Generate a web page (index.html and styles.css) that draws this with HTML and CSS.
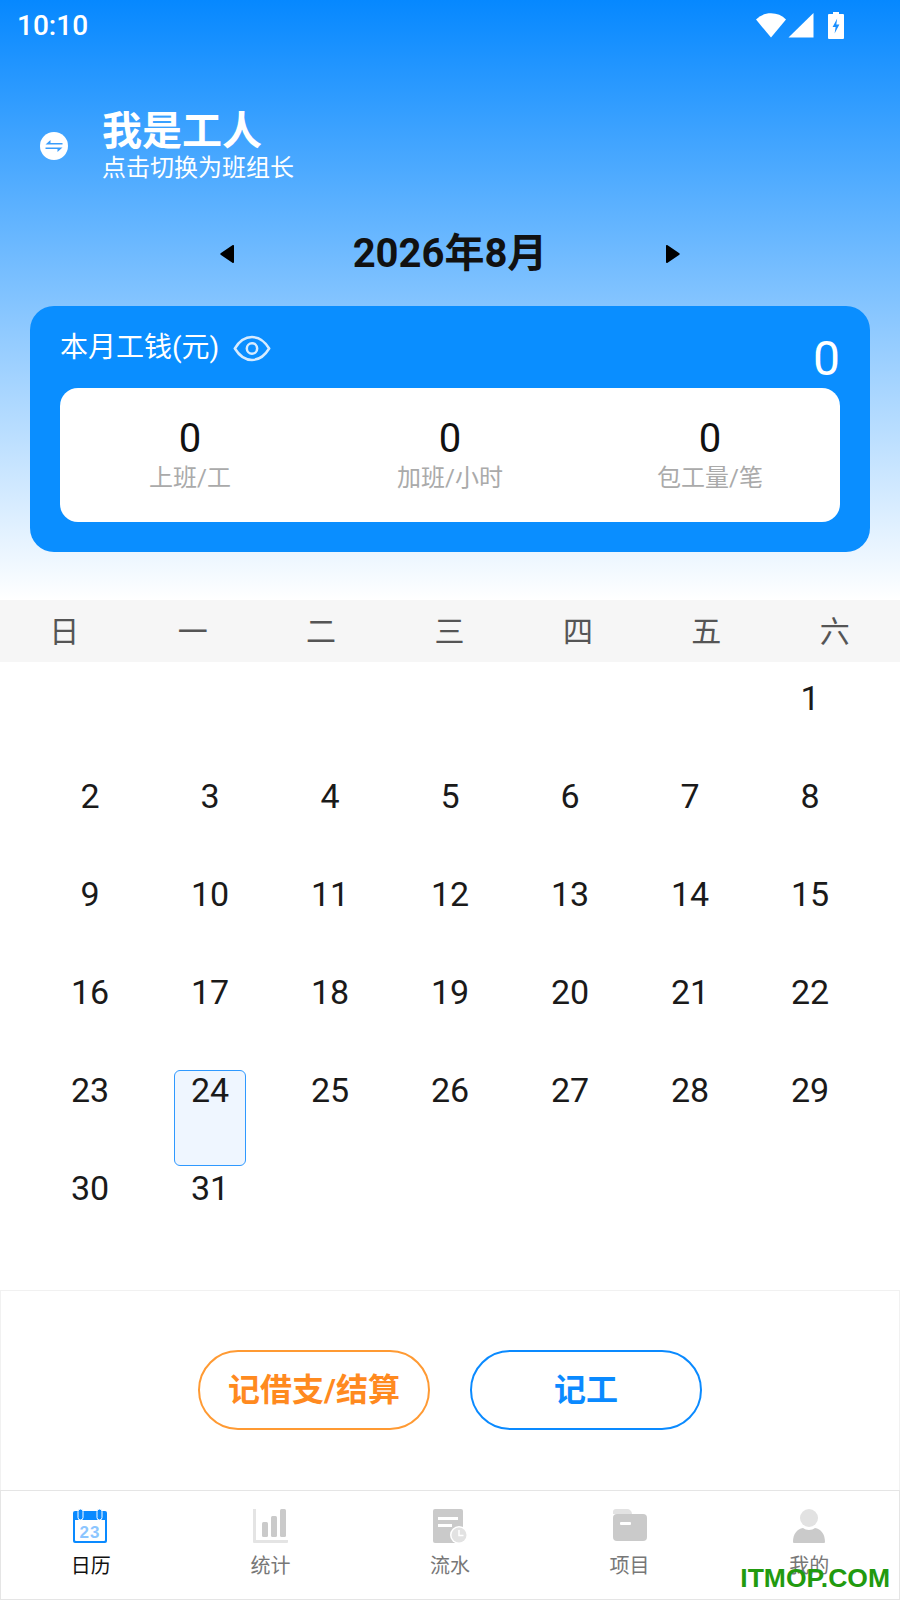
FILE: index.html
```html
<!DOCTYPE html>
<html lang="zh">
<head>
    <meta charset="UTF-8">
    <meta name="viewport" content="width=device-width, initial-scale=1.0">
    <title>我是工人</title>
    <link rel="stylesheet" href="styles.css">
</head>
<body>
<div class="page">
    <!-- Blue header -->
    <div class="header">
        <div class="status-bar">
            <span class="status-time">10:10</span>
            <div class="status-icons">
                <svg class="icon-wifi" width="30" height="26" viewBox="0 0 30 26"><path d="M0 7.500C4 3.400 9 1.300 15 1.300s11 2.100 15 6.200L15 25.600z" fill="#fff"/></svg>
                <svg class="icon-signal" width="26" height="26" viewBox="0 0 26 26"><path d="M25.500 1v24.500H.5z" fill="#fff"/></svg>
                <svg class="icon-battery" width="16" height="27" viewBox="0 0 16 27"><path d="M5 0h6v2h4a1 1 0 0 1 1 1v23a1 1 0 0 1-1 1H1a1 1 0 0 1-1-1V3a1 1 0 0 1 1-1h4z" fill="#fff"/><path d="M9.200 6.500 4.600 15h3l-1 6.500 4.800-9h-3.100z" fill="#1a90ff"/></svg>
            </div>
        </div>

        <div class="role-row">
            <svg class="role-icon" width="28" height="28" viewBox="0 0 28 28">
                <circle cx="14" cy="14" r="14" fill="#fff"/>
                <path d="M5.500 12.500 10.500 8v3h12v1.500zM22.500 15.500 17.500 20v-3h-12v-1.500z" fill="#3a9dfc"/>
            </svg>
            <div class="role-text">
                <div class="role-title">我是工人</div>
                <div class="role-sub">点击切换为班组长</div>
            </div>
        </div>

        <div class="month-row">
            <svg width="15" height="18" viewBox="0 0 15 18"><path d="M14 1v16a1 1 0 0 1-1.600.8L1 10a1.200 1.200 0 0 1 0-2L12.400.2A1 1 0 0 1 14 1z" fill="#000"/></svg>
            <span class="month-title">2026年8月</span>
            <svg width="15" height="18" viewBox="0 0 15 18"><path d="M1 1v16a1 1 0 0 0 1.600.8L14 10a1.200 1.200 0 0 0 0-2L2.600.2A1 1 0 0 0 1 1z" fill="#000"/></svg>
        </div>

        <div class="wage-card">
            <div class="wage-top">
                <span class="wage-label">本月工钱(元)</span>
                <svg class="wage-eye" width="38" height="27" viewBox="0 0 36 26" fill="none" stroke="#d6ebff" stroke-width="2.400">
                    <path d="M1.500 13C6 5.500 11.500 2 18 2s12 3.500 16.500 11C30 20.500 24.500 24 18 24S6 20.500 1.500 13z"/>
                    <circle cx="18" cy="13" r="5"/>
                </svg>
                <span class="wage-amount">0</span>
            </div>
            <div class="wage-stats">
                <div class="stat">
                    <div class="stat-num">0</div>
                    <div class="stat-label">上班/工</div>
                </div>
                <div class="stat">
                    <div class="stat-num">0</div>
                    <div class="stat-label">加班/小时</div>
                </div>
                <div class="stat">
                    <div class="stat-num">0</div>
                    <div class="stat-label">包工量/笔</div>
                </div>
            </div>
        </div>
    </div>

    <!-- Calendar -->
    <div class="week-row">
        <span>日</span><span>一</span><span>二</span><span>三</span><span>四</span><span>五</span><span>六</span>
    </div>
    <div class="calendar">
        <div class="day"></div><div class="day"></div><div class="day"></div><div class="day"></div><div class="day"></div><div class="day"></div><div class="day">1</div>
        <div class="day">2</div><div class="day">3</div><div class="day">4</div><div class="day">5</div><div class="day">6</div><div class="day">7</div><div class="day">8</div>
        <div class="day">9</div><div class="day">10</div><div class="day">11</div><div class="day">12</div><div class="day">13</div><div class="day">14</div><div class="day">15</div>
        <div class="day">16</div><div class="day">17</div><div class="day">18</div><div class="day">19</div><div class="day">20</div><div class="day">21</div><div class="day">22</div>
        <div class="day">23</div><div class="day today">24</div><div class="day">25</div><div class="day">26</div><div class="day">27</div><div class="day">28</div><div class="day">29</div>
        <div class="day">30</div><div class="day">31</div>
    </div>

    <!-- Action buttons -->
    <div class="actions">
        <button class="btn btn-orange">记借支/结算</button>
        <button class="btn btn-blue">记工</button>
    </div>

    <!-- Bottom tabs -->
    <div class="tabbar">
        <div class="tab active">
            <svg width="36" height="36" viewBox="0 0 36 36">
                <path d="M3 3h30a2 2 0 0 1 2 2v28a2 2 0 0 1-2 2H3a2 2 0 0 1-2-2V5a2 2 0 0 1 2-2z" fill="#0a8aff"/>
                <path d="M3 12h30v20a1 1 0 0 1-1 1H4a1 1 0 0 1-1-1z" fill="#fff"/>
                <rect x="6" y="1" width="5" height="11" rx="2.500" fill="#0a8aff" stroke="#fff"/>
                <rect x="25" y="1" width="5" height="11" rx="2.500" fill="#0a8aff" stroke="#fff"/>
                <text x="18" y="29.500" text-anchor="middle" class="cal-num">23</text>
            </svg>
            <span>日历</span>
        </div>
        <div class="tab">
            <svg width="36" height="36" viewBox="0 0 36 36">
                <path d="M1 1h3v31h32v2a1 1 0 0 1-1 1H2a1 1 0 0 1-1-1z" fill="#e4e4e4"/>
                <rect x="10" y="14" width="6" height="15" rx="1.500" fill="#cacaca"/>
                <rect x="19" y="8" width="6" height="21" rx="1.500" fill="#cacaca"/>
                <rect x="28" y="1" width="6" height="28" rx="1.500" fill="#cacaca"/>
            </svg>
            <span>统计</span>
        </div>
        <div class="tab">
            <svg width="36" height="36" viewBox="0 0 36 36">
                <rect x="1" y="1" width="30" height="34" rx="2" fill="#cacaca"/>
                <rect x="6" y="9" width="20" height="3" fill="#fff"/>
                <rect x="6" y="16" width="14" height="3" fill="#fff"/>
                <circle cx="27" cy="27" r="9" fill="#fff"/>
                <circle cx="27" cy="27" r="7.500" fill="#e2e2e2"/>
                <path d="M27 22v5.500h4.500" fill="none" stroke="#fff" stroke-width="1.500"/>
            </svg>
            <span>流水</span>
        </div>
        <div class="tab">
            <svg width="36" height="36" viewBox="0 0 36 36">
                <path d="M4 1h11a5 5 0 0 1 5 5H1V4a3 3 0 0 1 3-3z" fill="#e2e2e2"/>
                <rect x="1" y="6" width="34" height="27" rx="4" fill="#cacaca"/>
                <rect x="8" y="14" width="11" height="3" rx="1" fill="#fff"/>
            </svg>
            <span>项目</span>
        </div>
        <div class="tab">
            <svg width="36" height="36" viewBox="0 0 36 36">
                <circle cx="18" cy="10" r="9" fill="#e2e2e2"/>
                <path d="M2 34c0-8 4-13 10-14 3 2.500 9 2.500 12 0 6 1 10 6 10 14a1 1 0 0 1-1 1H3a1 1 0 0 1-1-1z" fill="#cacaca"/>
            </svg>
            <span>我的</span>
        </div>
    </div>

    <div class="watermark">ITMOP.COM</div>
</div>
</body>
</html>
```

FILE: styles.css
```css
* {
    box-sizing: border-box;
}
body {
    margin: 0;
    font-family: Roboto, "Noto Sans CJK SC", sans-serif;
    color: #111;
    background: #fff;
}
.page {
    position: relative;
    width: 900px;
    height: 1600px;
    overflow: hidden;
    display: flex;
    flex-direction: column;
}

/* header */
.header {
    height: 600px;
    padding: 0 30px;
    background: linear-gradient(180deg, #0688ff 0%, #fff 100%);
}
.status-bar {
    height: 50px;
    margin: 0 -30px;
    padding: 0 56px 0 17px;
    display: flex;
    align-items: center;
    justify-content: space-between;
    color: #fff;
}
.status-time {
    font-size: 28px;
    font-weight: 500;
}
.status-icons {
    display: flex;
    align-items: center;
    gap: 2px;
}
.icon-battery {
    margin-left: 12px;
}
.role-row {
    display: flex;
    align-items: center;
    margin-top: 59px;
    padding-left: 10px;
    gap: 34px;
    color: #fff;
}
.role-icon {
    margin-top: 2px;
}
.role-text {
    display: flex;
    flex-direction: column;
}
.role-title {
    font-size: 40px;
    font-weight: 700;
    line-height: 46px;
}
.role-sub {
    font-size: 24px;
    line-height: 26px;
}
.month-row {
    display: flex;
    align-items: center;
    justify-content: space-between;
    margin-top: 44px;
    height: 58px;
    padding: 0 190px;
}
.month-title {
    font-size: 40px;
    font-weight: 700;
    line-height: 58px;
}

/* wage card */
.wage-card {
    margin-top: 23px;
    height: 246px;
    padding: 0 30px;
    border-radius: 24px;
    background: #0a8eff;
}
.wage-top {
    height: 82px;
    display: flex;
    align-items: center;
    color: #fff;
}
.wage-label {
    font-size: 28px;
    margin-top: -5px;
}
.wage-eye {
    margin-left: 14px;
    margin-top: 3px;
}
.wage-amount {
    margin-left: auto;
    margin-top: 23px;
    font-size: 48px;
    line-height: 50px;
}
.wage-stats {
    height: 134px;
    padding-top: 30px;
    display: grid;
    grid-template-columns: repeat(3, 1fr);
    border-radius: 18px;
    background: #fff;
    text-align: center;
}
.stat-num {
    font-size: 40px;
    line-height: 42px;
}
.stat-label {
    font-size: 24px;
    line-height: 36px;
    color: #aaa;
}

/* calendar */
.week-row {
    height: 62px;
    padding: 0 1px 4px 0;
    display: grid;
    grid-template-columns: repeat(7, 1fr);
    align-items: center;
    justify-items: center;
    background: #f6f6f6;
    font-size: 30px;
    color: #555;
}
.calendar {
    padding: 16px 30px 0;
    height: 628px;
    display: grid;
    grid-template-columns: repeat(7, 120px);
    grid-auto-rows: 98px;
    font-size: 34px;
    color: #1a1a1a;
}
.day {
    height: 96px;
    width: 72px;
    justify-self: center;
    text-align: center;
    line-height: 40px;
}
.today {
    border: 1px solid #2f99ff;
    border-radius: 6px;
    background: #eff6ff;
    line-height: 38px;
}

/* buttons */
.actions {
    height: 200px;
    display: flex;
    align-items: center;
    justify-content: center;
    gap: 40px;
    padding-bottom: 2px;
    border: 1px solid #f1f1f1;
    border-bottom: 0;
}
.btn {
    width: 232px;
    height: 80px;
    padding: 0 0 6px;
    border-radius: 40px;
    background: #fff;
    font-family: inherit;
    font-size: 32px;
    font-weight: 700;
}
.btn-orange {
    border: 2px solid #ff9a33;
    color: #ff8a1f;
}
.btn-blue {
    border: 2px solid #0a8aff;
    color: #0a8aff;
}

/* tabs */
.tabbar {
    flex: 1;
    display: grid;
    grid-template-columns: repeat(5, 1fr);
    border: 1px solid #e5e5e5;
    background: #fff;
}
.tab {
    display: flex;
    flex-direction: column;
    align-items: center;
    padding-top: 17px;
    font-size: 20px;
    color: #777;
}
.tab.active svg {
    margin-left: -2px;
}
.tab span {
    margin-top: 7px;
    line-height: 30px;
}
.tab.active {
    color: #111;
}
.cal-num {
    font-family: "Liberation Sans", sans-serif;
    font-size: 17px;
    font-weight: 700;
    letter-spacing: 1px;
    fill: #8cc6ff;
}
.watermark {
    position: absolute;
    right: 10px;
    bottom: 8px;
    font-family: "Liberation Sans", sans-serif;
    font-size: 26.500px;
    font-weight: 700;
    line-height: 28px;
    color: #229a0f;
}
```
